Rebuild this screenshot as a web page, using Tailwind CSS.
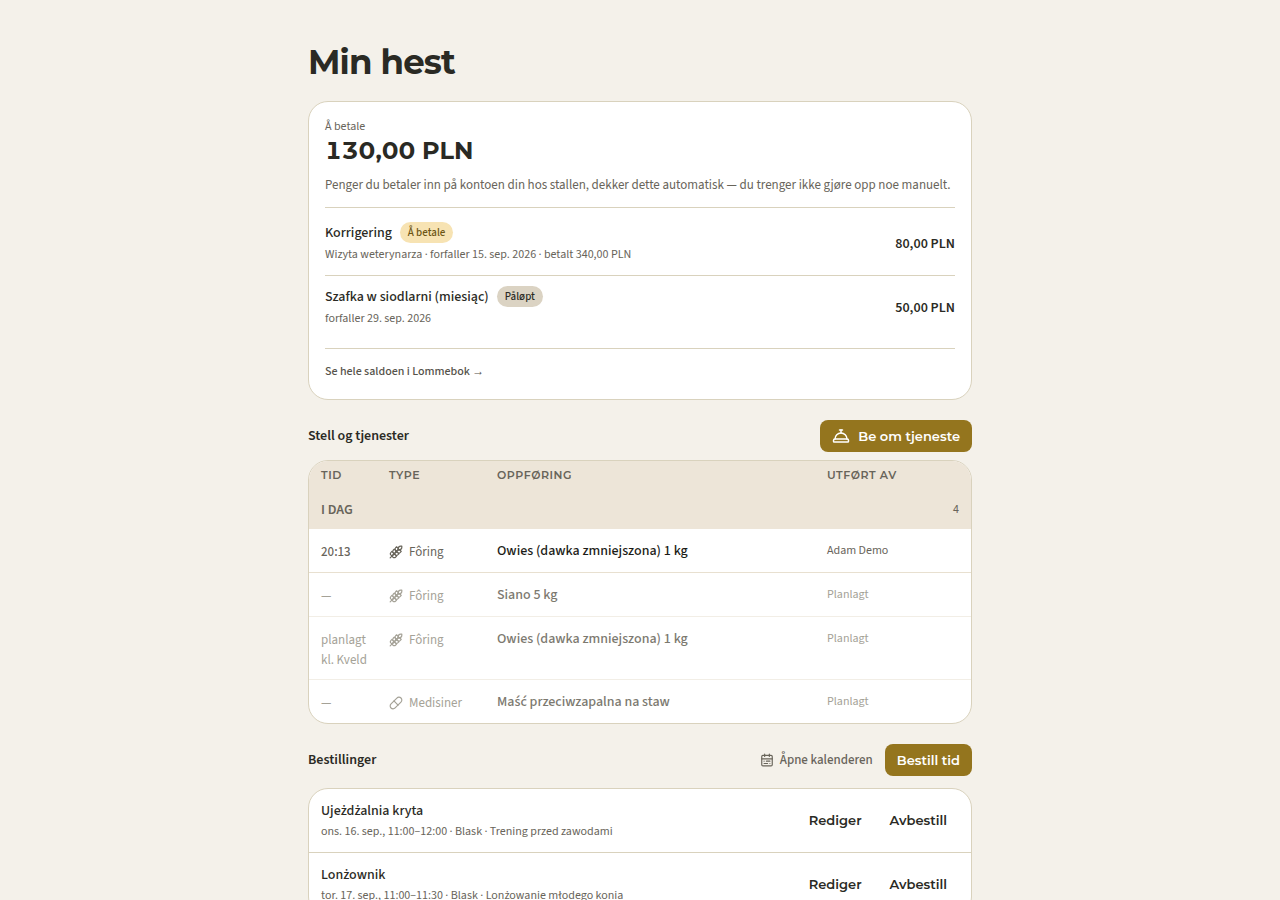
<!DOCTYPE html>
<html lang="no">
<head>
  <meta charset="utf-8">
  <meta name="viewport" content="width=device-width, initial-scale=1">
  <title>Min hest</title>
  <script src="https://cdn.jsdelivr.net/npm/@tailwindcss/browser@4"></script>
</head>
<body class="bg-[#f4f1ea] text-[#2a2a24] font-['Source_Sans_3','Source_Sans_Pro','Noto_Sans',sans-serif] text-[12px] leading-5">
  <!-- shared icons -->
  <svg class="hidden" aria-hidden="true">
    <symbol id="wheat" viewBox="0 0 24 24" fill="none" stroke="currentColor" stroke-width="2" stroke-linecap="round" stroke-linejoin="round">
      <path d="M2 22 16 8"/>
      <path d="M3.470 12.530 5 11l1.530 1.530a3.500 3.500 0 0 1 0 4.940L5 19l-1.530-1.530a3.500 3.500 0 0 1 0-4.940Z"/>
      <path d="M7.470 8.530 9 7l1.530 1.530a3.500 3.500 0 0 1 0 4.940L9 15l-1.530-1.530a3.500 3.500 0 0 1 0-4.940Z"/>
      <path d="M11.470 4.530 13 3l1.530 1.530a3.500 3.500 0 0 1 0 4.940L13 11l-1.530-1.530a3.500 3.500 0 0 1 0-4.940Z"/>
      <path d="M20 2h2v2a4 4 0 0 1-4 4h-2V6a4 4 0 0 1 4-4Z"/>
      <path d="M11.470 17.470 13 19l-1.530 1.530a3.500 3.500 0 0 1-4.940 0L5 19l1.530-1.530a3.500 3.500 0 0 1 4.940 0Z"/>
      <path d="M15.470 13.470 17 15l-1.530 1.530a3.500 3.500 0 0 1-4.940 0L9 15l1.530-1.530a3.500 3.500 0 0 1 4.940 0Z"/>
      <path d="M19.470 9.470 21 11l-1.530 1.530a3.500 3.500 0 0 1-4.940 0L13 11l1.530-1.530a3.500 3.500 0 0 1 4.940 0Z"/>
    </symbol>
    <symbol id="pill" viewBox="0 0 24 24" fill="none" stroke="currentColor" stroke-width="2" stroke-linecap="round" stroke-linejoin="round">
      <path d="m10.500 20.500 10-10a4.950 4.950 0 1 0-7-7l-10 10a4.950 4.950 0 1 0 7 7Z"/>
      <path d="m8.500 8.500 7 7"/>
    </symbol>
  </svg>

  <main class="mx-auto max-w-[712px] px-6 pt-10 pb-10">
    <h1 class="mb-4 font-['Montserrat','Inter',sans-serif] text-[34px] leading-[45px] font-bold tracking-tight">Min hest</h1>

    <section class="rounded-[20px] border border-[#d9d2bd] bg-white px-4 pt-4 pb-[17px]">
      <p class="leading-[18px] text-[#68645a]">Å betale</p>
      <p class="font-['Montserrat','Inter',sans-serif] text-[24px] leading-[30px] font-bold tabular-nums">130,00 PLN</p>
      <p class="mt-2 text-[13px] leading-[22px] text-[#68645a]">Penger du betaler inn på kontoen din hos stallen, dekker dette automatisk — du trenger ikke gjøre opp noe manuelt.</p>
      <ul class="mt-[11px] border-y border-[#d9d2bd] pt-1 pb-[9px]">
        <li class="flex items-center justify-between border-b border-[#d9d2bd] py-2.5">
          <div>
            <div class="flex items-center gap-2">
              <span class="text-[14px] font-medium">Korrigering</span>
              <span class="rounded-full bg-[#f7e3b3] px-2 text-[11px] leading-[21px] font-medium text-[#6c5514]">Å betale</span>
            </div>
            <p class="mt-0.5 text-[#68645a]">Wizyta weterynarza · forfaller 15. sep. 2026 · betalt 340,00 PLN</p>
          </div>
          <span class="text-[14px] font-semibold">80,00 PLN</span>
        </li>
        <li class="flex items-center justify-between py-2.5">
          <div>
            <div class="flex items-center gap-2">
              <span class="text-[14px] font-medium">Szafka w siodlarni (miesiąc)</span>
              <span class="rounded-full bg-[#dbd3c3] px-2 text-[11px] leading-[21px] font-medium">Påløpt</span>
            </div>
            <p class="mt-0.5 text-[#68645a]">forfaller 29. sep. 2026</p>
          </div>
          <span class="text-[14px] font-semibold">50,00 PLN</span>
        </li>
      </ul>
      <a href="#" class="mt-3 block font-medium text-[#55524a]">Se hele saldoen i Lommebok <span class="font-['Noto_Sans']">→</span></a>
    </section>

    <section class="mt-5">
      <div class="mb-2 flex items-center justify-between">
        <h2 class="text-[14px] font-semibold">Stell og tjenester</h2>
        <button type="button" class="flex h-8 items-center gap-2 rounded-lg bg-[#94751e] px-3 font-['Montserrat','Inter',sans-serif] text-[13px] font-semibold text-white">
          <svg class="size-[18px]" viewBox="0 0 24 24" fill="none" stroke="currentColor" stroke-width="2" stroke-linecap="round" stroke-linejoin="round">
            <path d="M3 20a1 1 0 0 1-1-1v-1a2 2 0 0 1 2-2h16a2 2 0 0 1 2 2v1a1 1 0 0 1-1 1Z"/>
            <path d="M20 16a8 8 0 1 0-16 0"/>
            <path d="M12 4v4"/>
            <path d="M10 4h4"/>
          </svg>
          Be om tjeneste
        </button>
      </div>
      <div class="overflow-hidden rounded-[20px] border border-[#d9d2bd] bg-white">
        <table class="w-full table-fixed text-left align-top text-[#68645a]">
          <thead class="bg-[#ede5d8]">
            <tr class="h-[29px] font-['Montserrat','Inter',sans-serif] text-[11px] tracking-wider">
              <th scope="col" class="w-[68px] px-3 pb-0.5 font-semibold">TID</th>
              <th scope="col" class="w-[108px] px-3 pb-0.5 font-semibold">TYPE</th>
              <th scope="col" class="px-3 pb-0.5 font-semibold">OPPFØRING</th>
              <th scope="col" class="w-[156px] px-3 pb-0.5 font-semibold">UTFØRT AV</th>
            </tr>
          </thead>
          <tbody>
            <tr class="h-[39px] bg-[#ede5d8]">
              <th scope="rowgroup" colspan="3" class="px-3 text-[14px] font-semibold">I DAG</th>
              <td class="px-3 text-right">4</td>
            </tr>
            <tr class="border-b border-[#e8e0d0] align-top">
              <td class="px-3 pt-[13px] pb-2.5 text-[13px] font-medium">20:13</td>
              <td class="px-3 pt-[13px] pb-2.5 text-[13px]"><span class="flex items-center gap-1.5"><svg class="size-3.5"><use href="#wheat"/></svg>Fôring</span></td>
              <td class="px-3 pt-3 pb-2.5 text-[14px] font-medium text-[#1c1c17]">Owies (dawka zmniejszona) 1 kg</td>
              <td class="px-3 pt-3 pb-2.5">Adam Demo</td>
            </tr>
            <tr class="border-b border-[#f2eee6] align-top text-[#a5a297]">
              <td class="px-3 pt-[13px] pb-2.5 text-[13px]">—</td>
              <td class="px-3 pt-[13px] pb-2.5 text-[13px]"><span class="flex items-center gap-1.5"><svg class="size-3.5"><use href="#wheat"/></svg>Fôring</span></td>
              <td class="px-3 pt-3 pb-2.5 text-[14px] font-medium text-[#7c796f]">Siano 5 kg</td>
              <td class="px-3 pt-3 pb-2.5">Planlagt</td>
            </tr>
            <tr class="border-b border-[#f2eee6] align-top text-[#a5a297]">
              <td class="pt-[13px] pr-2 pb-[9px] pl-3 text-[13px]">planlagt<br>kl. Kveld</td>
              <td class="px-3 pt-[13px] pb-[9px] text-[13px]"><span class="flex items-center gap-1.5"><svg class="size-3.5"><use href="#wheat"/></svg>Fôring</span></td>
              <td class="px-3 pt-3 pb-2.5 text-[14px] font-medium text-[#7c796f]">Owies (dawka zmniejszona) 1 kg</td>
              <td class="px-3 pt-3 pb-2.5">Planlagt</td>
            </tr>
            <tr class="align-top text-[#a5a297]">
              <td class="px-3 pt-[13px] pb-2.5 text-[13px]">—</td>
              <td class="px-3 pt-[13px] pb-2.5 text-[13px]"><span class="flex items-center gap-1.5"><svg class="size-3.5"><use href="#pill"/></svg>Medisiner</span></td>
              <td class="px-3 pt-3 pb-2.5 text-[14px] font-medium text-[#7c796f]">Maść przeciwzapalna na staw</td>
              <td class="px-3 pt-3 pb-2.5">Planlagt</td>
            </tr>
          </tbody>
        </table>
      </div>
    </section>

    <section class="mt-5">
      <div class="mb-3 flex items-center justify-between">
        <h2 class="text-[14px] font-semibold">Bestillinger</h2>
        <div class="flex items-center gap-3">
          <a href="#" class="flex items-center gap-1.5 text-[13px] font-medium text-[#68645a]">
            <svg class="size-3.5" viewBox="0 0 24 24" fill="none" stroke="currentColor" stroke-width="2" stroke-linecap="round" stroke-linejoin="round">
              <rect x="3" y="4" width="18" height="18" rx="2"/>
              <path d="M3 10h18M8 2v4M16 2v4M17 14h-6M13 18H7M7 14h.01M17 18h.01"/>
            </svg>
            Åpne kalenderen
          </a>
          <button type="button" class="h-8 rounded-lg bg-[#94751e] px-3 font-['Montserrat','Inter',sans-serif] text-[13px] font-semibold text-white">Bestill tid</button>
        </div>
      </div>
      <ul class="overflow-hidden rounded-[20px] border border-[#d9d2bd] bg-white">
        <li class="flex items-center justify-between border-b border-[#d9d2bd] px-3">
          <div class="pt-3 pb-2.5">
            <p class="text-[14px] font-medium">Ujeżdżalnia kryta</p>
            <p class="mt-px text-[#68645a]">ons. 16. sep., 11:00–12:00 · Blask · Trening przed zawodami</p>
          </div>
          <div class="flex gap-1 pb-0.5 font-['Montserrat','Inter',sans-serif] text-[13px] font-semibold">
            <button type="button" class="px-3">Rediger</button>
            <button type="button" class="px-3">Avbestill</button>
          </div>
        </li>
        <li class="flex items-center justify-between px-3">
          <div class="pt-3 pb-2.5">
            <p class="text-[14px] font-medium">Lonżownik</p>
            <p class="mt-px text-[#68645a]">tor. 17. sep., 11:00–11:30 · Blask · Lonżowanie młodego konia</p>
          </div>
          <div class="flex gap-1 pb-0.5 font-['Montserrat','Inter',sans-serif] text-[13px] font-semibold">
            <button type="button" class="px-3">Rediger</button>
            <button type="button" class="px-3">Avbestill</button>
          </div>
        </li>
      </ul>
    </section>
  </main>
</body>
</html>
